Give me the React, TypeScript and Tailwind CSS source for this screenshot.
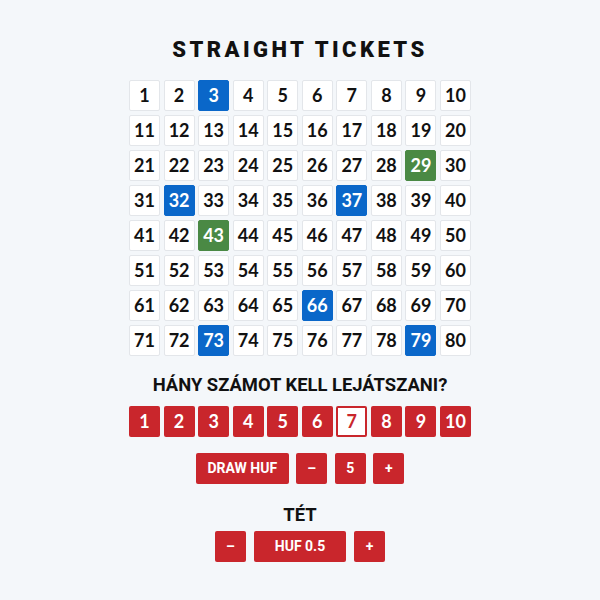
const blue = [3, 32, 37, 66, 73, 79];
const green = [29, 43];

function Cell({ n }: { n: number }) {
  const isBlue = blue.includes(n);
  const isGreen = green.includes(n);
  const tone = isBlue
    ? 'bg-[#0a67c9] border-[#0a67c9] text-white'
    : isGreen
      ? 'bg-[#4a8944] border-[#4a8944] text-white'
      : 'bg-white border-[#e3e6ea] text-[#111]';
  return (
    <div
      className={`h-[31px] flex items-center justify-center rounded-[2px] border text-[18px] font-bold ${tone}`}
      style={{ fontFamily: 'Lato, sans-serif' }}
    >
      {n}
    </div>
  );
}

function RedBtn({ children, className = '' }: { children: React.ReactNode; className?: string }) {
  return (
    <button
      className={`h-[31px] flex items-center justify-center rounded-[2px] bg-[#c9262c] text-white text-[14px] font-bold uppercase ${className}`}
    >
      {children}
    </button>
  );
}

export default function App() {
  const numbers = Array.from({ length: 80 }, (_, i) => i + 1);
  const picks = Array.from({ length: 10 }, (_, i) => i + 1);

  return (
    <div
      className="min-h-screen bg-[#f4f7fa] flex flex-col items-center pt-[36px]"
      style={{ fontFamily: 'Roboto, sans-serif' }}
    >
      <h1 className="text-[22px] leading-[28px] font-black tracking-[3.4px] text-[#111]">STRAIGHT TICKETS</h1>

      <div className="mt-[16px] w-[342px] grid grid-cols-10 gap-x-[3.5px] gap-y-[4px]">
        {numbers.map((n) => (
          <Cell key={n} n={n} />
        ))}
      </div>

      <h2 className="mt-[17px] text-[18.4px] leading-[24px] font-bold text-[#111]">HÁNY SZÁMOT KELL LEJÁTSZANI?</h2>

      {/* how many numbers to play */}
      <div className="mt-[9px] w-[342px] grid grid-cols-10 gap-x-[3.5px]">
        {picks.map((n) =>
          n === 7 ? (
            <div
              key={n}
              className="h-[31px] flex items-center justify-center rounded-[2px] border-2 border-[#c9262c] bg-white text-[#c9262c] text-[18px] font-bold"
              style={{ fontFamily: 'Lato, sans-serif' }}
            >
              {n}
            </div>
          ) : (
            <div
              key={n}
              className="h-[31px] flex items-center justify-center rounded-[2px] bg-[#c9262c] text-white text-[18px] font-bold"
              style={{ fontFamily: 'Lato, sans-serif' }}
            >
              {n}
            </div>
          )
        )}
      </div>

      <div className="mt-[16px] flex gap-[7.5px]">
        <RedBtn className="w-[93px]">Draw HUF</RedBtn>
        <RedBtn className="w-[31px]">–</RedBtn>
        <RedBtn className="w-[31px]">5</RedBtn>
        <RedBtn className="w-[31px]">+</RedBtn>
      </div>

      <h2 className="mt-[19px] text-[18.4px] leading-[24px] font-bold text-[#111]">TÉT</h2>

      <div className="mt-[4px] flex gap-[8px]">
        <RedBtn className="w-[31px]">–</RedBtn>
        <RedBtn className="w-[92px]">HUF 0.5</RedBtn>
        <RedBtn className="w-[31px]">+</RedBtn>
      </div>
    </div>
  );
}
